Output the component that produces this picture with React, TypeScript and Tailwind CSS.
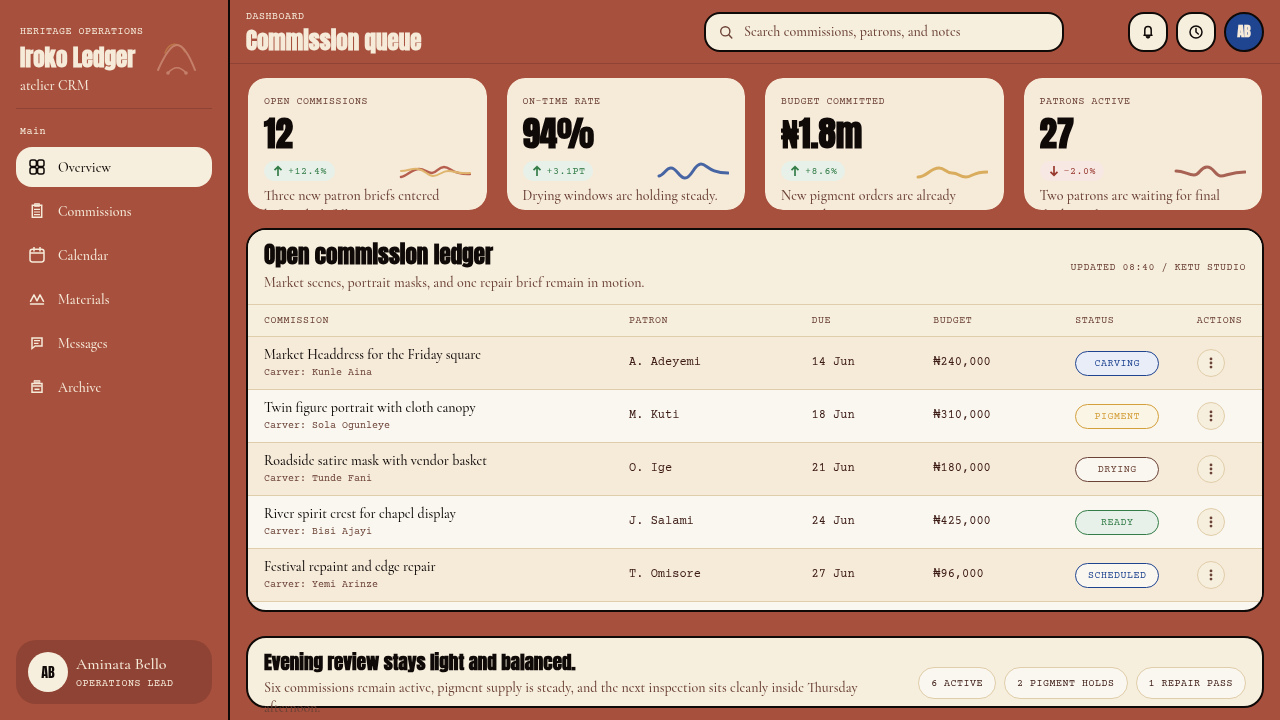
import type { ReactNode } from "react";

const display = "font-['Anton','Roboto',sans-serif]";
const mono = "font-['Courier_Prime','Liberation_Mono',monospace]";

const navItems = [
  { label: "Overview", icon: <OverviewIcon />, active: true },
  { label: "Commissions", icon: <ClipboardIcon /> },
  { label: "Calendar", icon: <CalendarIcon /> },
  { label: "Materials", icon: <MaterialsIcon /> },
  { label: "Messages", icon: <MessageIcon /> },
  { label: "Archive", icon: <ArchiveIcon /> },
];

interface Stat {
  label: string;
  value: string;
  delta: string;
  down?: boolean;
  note: string;
  lines: { d: string; color: string; width: number }[];
}

const stats: Stat[] = [
  {
    label: "Open commissions",
    value: "12",
    delta: "+12.4%",
    note: "Three new patron briefs entered before dusk fell.",
    lines: [
      { d: "M2 16 C8 15 13 8 20 8 C26 8 28 12 33 12 C38 12 39 6 45 6 C52 6 53 14 71 13", color: "#b75f4e", width: 2.5 },
      { d: "M2 10 C9 10 13 7 19 8 C26 9 29 15 34 15 C40 15 43 10 49 10 C57 10 57 13 71 12", color: "#dfb56d", width: 2 },
    ],
  },
  {
    label: "On-time rate",
    value: "94%",
    delta: "+3.1pt",
    note: "Drying windows are holding steady.",
    lines: [{ d: "M2 15 C7 14 9 7 14 7 C20 7 22 17 28 17 C35 17 37 3 44 3 C50 3 52 12 71 12", color: "#4765a3", width: 3 }],
  },
  {
    label: "Budget committed",
    value: "₦1.8m",
    delta: "+8.6%",
    note: "New pigment orders are already reserved.",
    lines: [{ d: "M2 16 C11 16 14 7 23 7 C29 7 30 12 36 12 C43 12 43 16 50 16 C56 16 57 11 71 11", color: "#d9ad5d", width: 3 }],
  },
  {
    label: "Patrons active",
    value: "27",
    delta: "-2.0%",
    down: true,
    note: "Two patrons are waiting for final shade marks.",
    lines: [{ d: "M2 10 C10 10 14 14 20 14 C26 14 26 6 33 6 C40 6 41 15 47 15 C52 15 57 11 71 11", color: "#a76253", width: 3 }],
  },
];

const rows = [
  { title: "Market Headdress for the Friday square", carver: "Kunle Aina", patron: "A. Adeyemi", due: "14 Jun", budget: "₦240,000", status: "Carving", tone: "border-[#1f4490] bg-[#e8edf8] text-[#1f4490]" },
  { title: "Twin figure portrait with cloth canopy", carver: "Sola Ogunleye", patron: "M. Kuti", due: "18 Jun", budget: "₦310,000", status: "Pigment", tone: "border-[#d4a03c] bg-[#fbf5e6] text-[#d4a03c]" },
  { title: "Roadside satire mask with vendor basket", carver: "Tunde Fani", patron: "O. Ige", due: "21 Jun", budget: "₦180,000", status: "Drying", tone: "border-[#6b4236] bg-[#faf7f0] text-[#6b4236]" },
  { title: "River spirit crest for chapel display", carver: "Bisi Ajayi", patron: "J. Salami", due: "24 Jun", budget: "₦425,000", status: "Ready", tone: "border-[#347d48] bg-[#e7f1e9] text-[#347d48]" },
  { title: "Festival repaint and edge repair", carver: "Yemi Arinze", patron: "T. Omisore", due: "27 Jun", budget: "₦96,000", status: "Scheduled", tone: "border-[#1f4490] bg-[#faf7f0] text-[#1f4490]" },
];

function Icon({ children }: { children: ReactNode }) {
  return (
    <svg
      width="18"
      height="18"
      viewBox="0 0 18 18"
      fill="none"
      stroke="currentColor"
      strokeWidth="1.5"
      className="shrink-0"
      aria-hidden="true"
    >
      {children}
    </svg>
  );
}

function OverviewIcon() {
  return (
    <Icon>
      <rect x="2" y="2" width="6.4" height="6.4" rx="2" />
      <rect x="9.6" y="2" width="6.4" height="6.4" rx="2" />
      <rect x="2" y="9.6" width="6.4" height="6.4" rx="2" />
      <rect x="9.6" y="9.6" width="6.4" height="6.4" rx="2" />
    </Icon>
  );
}

function ClipboardIcon() {
  return (
    <Icon>
      <path d="M4.3 3.2h9.4v12H4.3z" />
      <path d="M6.5 1.5h5v3h-5z" fill="currentColor" fillOpacity="0.7" strokeWidth="0.7" />
      <path d="M6 7.3h6M6 10h6M6 12.7h6" strokeWidth="1.2" />
    </Icon>
  );
}

function CalendarIcon() {
  return (
    <Icon>
      <rect x="2" y="3.3" width="14" height="12.7" rx="2.4" />
      <path d="M2 7h14M6 1v4.5M12 1v4.5" />
    </Icon>
  );
}

function MaterialsIcon() {
  return (
    <Icon>
      <path d="M2.5 11.3 6 4.8l3 6 3-6 3.5 6.5" strokeLinejoin="round" strokeLinecap="round" />
      <path d="M2.5 14h13" strokeLinecap="round" />
    </Icon>
  );
}

function MessageIcon() {
  return (
    <Icon>
      <path d="M4 4h10v8H7.2L4 14.5z" />
      <path d="M6 6.7h6M6 9.3h4.5" strokeWidth="1.2" />
    </Icon>
  );
}

function ArchiveIcon() {
  return (
    <Icon>
      <path d="M4 5.4h10v8.8H4z" />
      <path d="M6 2.5h6v2.2H6z" fill="currentColor" fillOpacity="0.7" strokeWidth="0.7" />
      <path d="M4.5 8h9M6.5 11.3h5" strokeWidth="1.4" />
    </Icon>
  );
}

function Emblem() {
  return (
    <svg width="42" height="40" viewBox="0 0 42 40" fill="none" strokeLinecap="round" className="shrink-0" aria-hidden="true">
      <path d="M9 13C13 2 23 1 29 12" stroke="#bb7446" strokeWidth="1.5" />
      <path d="M2 30C10 12 16 5 21 5S32 12 39 30" stroke="#c5806b" strokeWidth="2" />
      <path d="M12 33C18 26 24 26 30 33" stroke="#c5806b" strokeWidth="1.5" />
      <circle cx="12" cy="33" r="1.8" fill="#c5806b" />
      <circle cx="30" cy="33" r="1.8" fill="#c5806b" />
    </svg>
  );
}

function Sidebar() {
  return (
    <aside className="flex w-[230px] shrink-0 flex-col border-r-2 border-[#0f0a08] p-4 text-[#f6ead9]">
      <div className="flex items-center justify-between border-b border-[#8f4334] pb-3 pl-1 pr-3.5 pt-2">
        <div className="whitespace-nowrap">
          <p className={`${mono} w-0 text-[10px] leading-4 tracking-wider`}>HERITAGE OPERATIONS</p>
          <p className={`${display} mt-1 text-[23px] leading-7 font-bold`}>Iroko Ledger</p>
          <p className="mt-1 text-[14px] leading-5">atelier CRM</p>
        </div>
        <Emblem />
      </div>

      <p className={`${mono} mt-4 pl-1 text-[10px] leading-[14px] tracking-wider`}>Main</p>
      <nav className="mt-2 flex flex-col gap-1">
        {navItems.map((item) => (
          <a
            key={item.label}
            href="#"
            className={`flex h-10 items-center gap-3 rounded-2xl px-3 text-[14px] ${
              item.active ? "bg-[#f7efdd] text-[#0f0a08]" : ""
            }`}
          >
            {item.icon}
            {item.label}
          </a>
        ))}
      </nav>

      <div className="mt-auto flex h-16 items-center gap-2 rounded-[20px] bg-[#8f4334] px-3">
        <span className={`${display} flex size-10 items-center justify-center rounded-full bg-[#f7efdd] text-[14px] text-[#0f0a08]`}>
          AB
        </span>
        <div>
          <p className="text-[16px] leading-6">Aminata Bello</p>
          <p className={`${mono} text-[10px] leading-4 tracking-wider`}>OPERATIONS LEAD</p>
        </div>
      </div>
    </aside>
  );
}

function Header() {
  const roundButton =
    "flex size-10 items-center justify-center border-2 border-[#0f0a08]";

  return (
    <header className="flex h-16 shrink-0 items-center border-b border-[#8f4334] px-4">
      <div className="pt-0.5 text-[#f6ead9]">
        <p className={`${mono} text-[10px] leading-4 tracking-wider`}>DASHBOARD</p>
        <h1 className={`${display} text-[23px] leading-8 font-bold`}>Commission queue</h1>
      </div>
      <label className="ml-auto mr-16 flex h-10 w-[360px] items-center gap-2.5 rounded-2xl border-2 border-[#0f0a08] bg-[#f7efdd] pl-3 pr-4 text-[#6b4236]">
        <svg width="16" height="16" viewBox="0 0 16 16" fill="none" stroke="currentColor" strokeWidth="1.4" aria-hidden="true">
          <circle cx="7.3" cy="7.3" r="4.6" />
          <path d="m10.8 10.8 3 3.2" strokeLinecap="round" />
        </svg>
        <input
          type="search"
          aria-label="Search"
          placeholder="Search commissions, patrons, and notes"
          className="min-w-0 flex-1 bg-transparent text-[14px] outline-none placeholder:text-[#6b4236]"
        />
      </label>
      <div className="flex gap-2 text-[#0f0a08]">
        <button aria-label="Notifications" className={`${roundButton} rounded-2xl bg-[#f7efdd]`}>
          <svg width="16" height="16" viewBox="0 0 16 16" fill="none" stroke="currentColor" strokeWidth="1.5" aria-hidden="true">
            <path d="M4.8 11V5.8a3.2 3.2 0 0 1 6.4 0V11" />
            <path d="M4 11.2h8" strokeLinecap="round" />
            <path d="M6 12.2h4a2 2 0 0 1-4 0z" fill="currentColor" strokeWidth="0.8" />
          </svg>
        </button>
        <button aria-label="History" className={`${roundButton} rounded-2xl bg-[#f7efdd]`}>
          <svg width="16" height="16" viewBox="0 0 16 16" fill="none" stroke="currentColor" strokeWidth="1.5" aria-hidden="true">
            <circle cx="8" cy="8" r="6" />
            <path d="M8 4.5V8l2.3 2" strokeLinecap="round" />
          </svg>
        </button>
        <button aria-label="Account" className={`${roundButton} ${display} rounded-full bg-[#1f4490] text-[14px] font-bold text-[#f6ead9]`}>
          AB
        </button>
      </div>
    </header>
  );
}

function StatCard({ stat }: { stat: Stat }) {
  return (
    <article className="overflow-hidden rounded-[20px] border-2 border-[#a7503d] bg-[#f6ead9] bg-clip-padding p-4">
      <h2 className={`${mono} text-[10px] leading-4 tracking-wider text-[#6b4236] uppercase`}>{stat.label}</h2>
      <p className={`${display} mt-1 text-[35px] leading-10 font-bold text-[#0f0a08]`}>{stat.value}</p>
      <div className="mt-[7px] flex items-center justify-between">
        <span
          className={`${mono} flex h-5 items-center gap-1 rounded-full px-2 text-[10px] tracking-wider uppercase ${
            stat.down ? "bg-[#f8e8e3] text-[#98382e]" : "bg-[#e7f1e9] text-[#347d48]"
          }`}
        >
          <svg
            width="12"
            height="12"
            viewBox="0 0 12 12"
            fill="none"
            stroke="currentColor"
            strokeWidth="1.7"
            className={stat.down ? "rotate-180" : ""}
            aria-hidden="true"
          >
            <path d="M6 11V2M2.5 5.2 6 1.8l3.5 3.4" />
          </svg>
          {stat.delta}
        </span>
        <svg width="72" height="20" viewBox="0 0 72 20" fill="none" strokeLinecap="round" aria-hidden="true">
          {stat.lines.map((line) => (
            <path key={line.d} d={line.d} stroke={line.color} strokeWidth={line.width} />
          ))}
        </svg>
      </div>
      <p className="mt-[5px] text-[14px] leading-5 text-[#6b4236]">{stat.note}</p>
    </article>
  );
}

function Ledger() {
  const head = `${mono} px-4 text-left text-[10px] font-normal tracking-wider uppercase`;

  return (
    <section className="mt-4 min-h-0 flex-1 overflow-hidden rounded-[20px] border-2 border-[#0f0a08] bg-[#faf7f0]">
      <div className="flex h-[74px] items-center justify-between bg-[#f7efdd] px-4">
        <div>
          <h2 className={`${display} text-[23px] leading-8 font-bold text-[#0f0a08]`}>Open commission ledger</h2>
          <p className="text-[14px] leading-6 text-[#6b4236]">
            Market scenes, portrait masks, and one repair brief remain in motion.
          </p>
        </div>
        <p className={`${mono} text-[10px] tracking-wider text-[#6b4236]`}>UPDATED 08:40 / KETU STUDIO</p>
      </div>
      <table className="w-full table-fixed border-collapse">
        <thead>
          <tr className="h-8 border-y border-[#e0cda9] bg-[#f7efdd] text-[#6b4236]">
            <th className={`${head} w-[36%]`}>Commission</th>
            <th className={`${head} w-[18%]`}>Patron</th>
            <th className={`${head} w-[12%]`}>Due</th>
            <th className={`${head} w-[14%]`}>Budget</th>
            <th className={`${head} w-[12%]`}>Status</th>
            <th className={`${head} w-[8%]`}>Actions</th>
          </tr>
        </thead>
        <tbody>
          {rows.map((row) => (
            <tr key={row.title} className="h-[53px] border-b border-[#e0cda9] odd:bg-[#f6ead9] even:bg-[#faf7f0]">
              <td className="px-4">
                <p className="text-[14px] leading-5 text-[#0f0a08]">{row.title}</p>
                <p className={`${mono} text-[10px] leading-4 text-[#6b4236]`}>Carver: {row.carver}</p>
              </td>
              <td className={`${mono} px-4 text-[12px] text-[#3b1a14]`}>{row.patron}</td>
              <td className={`${mono} px-4 text-[12px] text-[#3b1a14]`}>{row.due}</td>
              <td className={`${mono} px-4 text-[12px] text-[#3b1a14]`}>{row.budget}</td>
              <td className="px-4">
                <span className={`${mono} ${row.tone} flex h-[25px] w-[84px] items-center justify-center rounded-full border text-[10px] tracking-wider uppercase`}>
                  {row.status}
                </span>
              </td>
              <td className="px-4">
                <button
                  aria-label={`Actions for ${row.title}`}
                  className="flex size-7 items-center justify-center rounded-full border border-[#e0cda9] bg-[#f7efdd] text-[#6b4236]"
                >
                  <svg width="14" height="14" viewBox="0 0 14 14" fill="currentColor" aria-hidden="true">
                    <circle cx="7" cy="2.9" r="1.4" />
                    <circle cx="7" cy="7" r="1.4" />
                    <circle cx="7" cy="11.1" r="1.4" />
                  </svg>
                </button>
              </td>
            </tr>
          ))}
        </tbody>
      </table>
    </section>
  );
}

function ReviewBar() {
  return (
    <section className="mt-6 flex h-[72px] shrink-0 justify-between rounded-[20px] border-2 border-[#0f0a08] bg-[#f7efdd] px-4 pt-2">
      <div className="max-w-[620px]">
        <h2 className={`${display} text-[19px] leading-8 font-bold text-[#0f0a08]`}>Evening review stays light and balanced.</h2>
        <p className="text-[14px] leading-5 text-[#6b4236]">
          Six commissions remain active, pigment supply is steady, and the next inspection sits cleanly inside Thursday
          afternoon.
        </p>
      </div>
      <ul className={`${mono} flex shrink-0 items-end gap-2 pb-[7px] text-[10px] tracking-wider text-[#3b1a14] uppercase`}>
        {["6 active", "2 pigment holds", "1 repair pass"].map((tag) => (
          <li key={tag} className="flex h-8 items-center rounded-full border border-[#e0cda9] bg-[#faf7f0] px-3">
            {tag}
          </li>
        ))}
      </ul>
    </section>
  );
}

export default function App() {
  return (
    <div className="bg-[#a7503d] font-['Cormorant_Garamond','EB_Garamond','Liberation_Serif',serif] font-medium">
      <div className="flex h-screen overflow-hidden will-change-transform">
        <Sidebar />
        <div className="flex min-w-0 flex-1 flex-col">
          <Header />
          <main className="flex min-h-0 flex-1 flex-col px-4 py-3">
            <div className="grid h-[136px] shrink-0 grid-cols-4 gap-4">
              {stats.map((stat) => (
                <StatCard key={stat.label} stat={stat} />
              ))}
            </div>
            <Ledger />
            <ReviewBar />
          </main>
        </div>
      </div>
    </div>
  );
}
